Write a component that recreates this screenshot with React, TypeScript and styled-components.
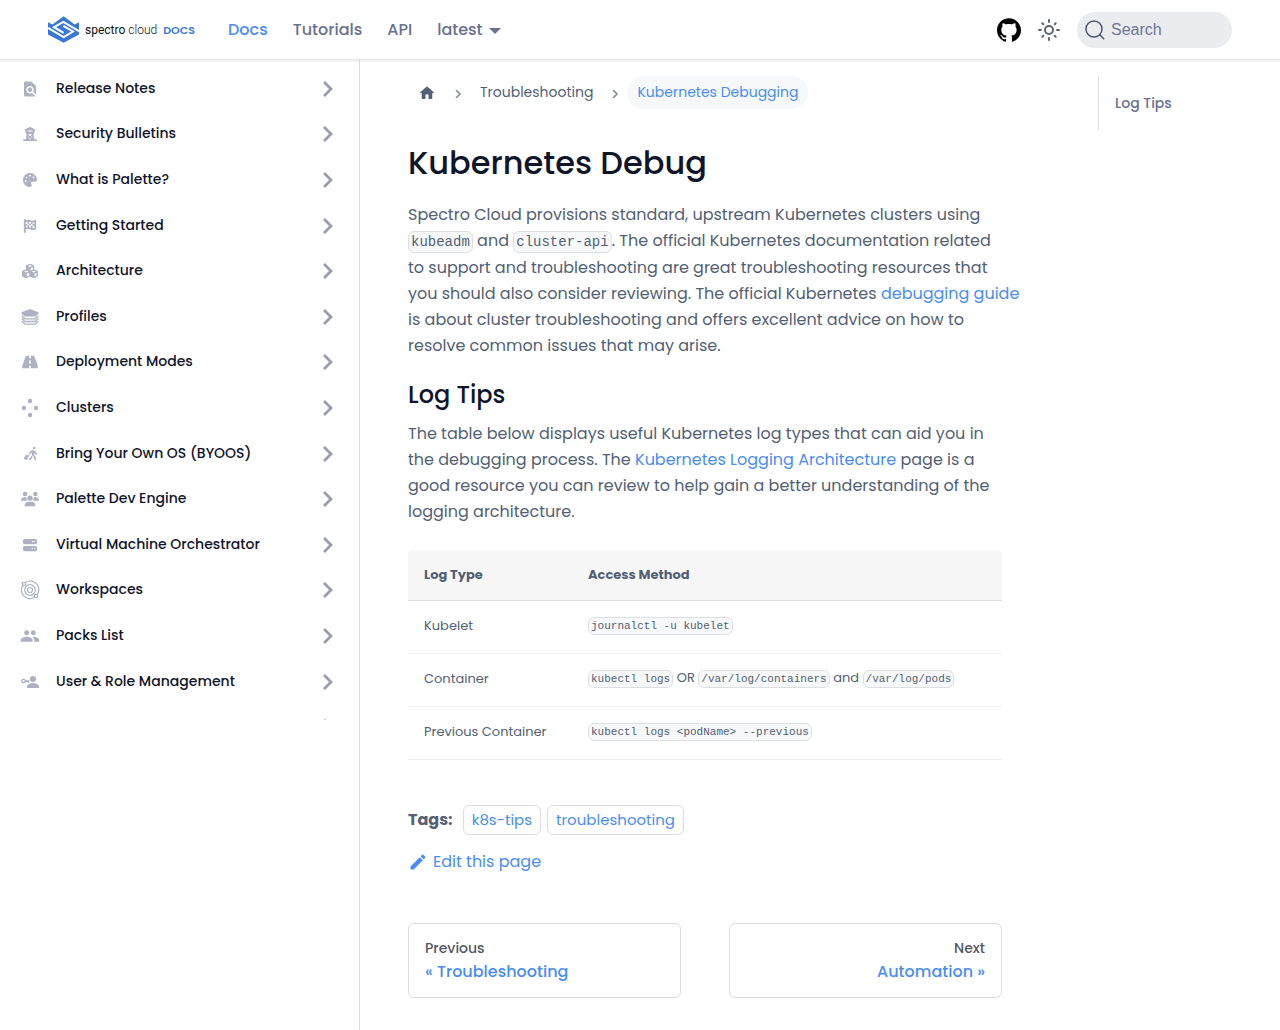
import React from "react";
import styled, { createGlobalStyle } from "styled-components";
import {
  FaCubes,
  FaFlagCheckered,
  FaPalette,
  FaPersonWalkingLuggage,
  FaRoad,
  FaServer,
  FaTowerObservation,
  FaUsers,
} from "react-icons/fa6";
import { MdEdit, MdFindInPage, MdPeople } from "react-icons/md";
import { SiGithub } from "react-icons/si";

const colors = {
  text: "#525f74",
  heading: "#10152a",
  link: "#4a8df2",
  nav: "#68718f",
  icon: "#adb1c1",
  chevron: "#9b9cb0",
  border: "#dadce0",
  code: "#f6f8fa",
};

const GlobalStyle = createGlobalStyle`
  *, *::before, *::after { box-sizing: border-box; }
  body {
    margin: 0;
    background: #fff;
    color: ${colors.text};
    font-family: Poppins, Inter, "Noto Sans", sans-serif;
    font-size: 16px;
    line-height: 26px;
  }
  a { color: ${colors.link}; text-decoration: none; }
  button { font: inherit; color: inherit; background: none; border: 0; padding: 0; cursor: pointer; }
`;

/* ---------- header ---------- */

const Header = styled.header`
  position: sticky;
  top: 0;
  z-index: 2;
  display: flex;
  align-items: center;
  justify-content: space-between;
  height: 60px;
  padding: 0 48px;
  background: #fff;
  border-bottom: 1px solid #e8e8e8;
  box-shadow: 0 1px 2px rgba(0, 0, 0, 0.1);
`;

const HeaderSide = styled.div<{ $gap: number }>`
  display: flex;
  align-items: center;
  gap: ${(p) => p.$gap}px;
`;

const Brand = styled.a`
  display: flex;
  align-items: center;
  gap: 6px;
  width: 148px;
  color: #111;
  font-family: Roboto, sans-serif;
  font-size: 12px;
  line-height: 16px;
  white-space: nowrap;
`;

const BrandLight = styled.span`
  font-weight: 300;
`;

const BrandDocs = styled.strong`
  color: #3a78d6;
  font-family: Poppins, Inter, sans-serif;
  font-size: 11px;
  font-weight: 600;
`;

const NavLinks = styled.nav`
  display: flex;
  align-items: center;
  gap: 25px;
`;

const NavLink = styled.a<{ $active?: boolean }>`
  display: flex;
  align-items: center;
  gap: 6px;
  color: ${(p) => (p.$active ? colors.link : colors.nav)};
  font-size: 16px;
  font-weight: 500;
`;

const Caret = styled.span`
  margin-top: 2px;
  border: 6px solid transparent;
  border-top-color: currentColor;
  border-bottom: 0;
`;

const IconLink = styled.a`
  display: flex;
  color: #000;
`;

const IconButton = styled.button`
  display: flex;
  color: #5b6478;
`;

const SearchButton = styled.button`
  display: flex;
  align-items: center;
  gap: 6px;
  width: 155px;
  height: 36px;
  padding: 0 8px;
  border-radius: 18px;
  background: #ebecf0;
  color: #6b759a;
  font-family: "Liberation Sans", Arial, sans-serif;
  font-size: 16px;
`;

/* ---------- page frame ---------- */

const Page = styled.div`
  display: grid;
  grid-template-columns: 360px minmax(0, 1fr);
  min-height: calc(100vh - 60px);
`;

const Sidebar = styled.aside`
  border-right: 1px solid ${colors.border};
`;

const SidebarScroll = styled.nav`
  height: 660px;
  padding-top: 6px;
  overflow: hidden;
`;

const SidebarList = styled.ul`
  display: grid;
  grid-auto-rows: 1fr;
  height: 684px;
  margin: 0;
  padding: 0;
  list-style: none;
`;

const SidebarItem = styled.li`
  display: flex;
  align-items: center;
  padding: 0 20px;
`;

const SidebarLink = styled.a`
  display: flex;
  flex: 1;
  align-items: center;
  gap: 16px;
  color: ${colors.heading};
  font-size: 14px;
  font-weight: 500;
  line-height: 20px;
`;

const SidebarLabel = styled.span`
  padding-bottom: 2px;
`;

const SidebarIcon = styled.span`
  display: flex;
  justify-content: center;
  width: 20px;
  color: ${colors.icon};
`;

const Expand = styled.button`
  display: flex;
  color: ${colors.chevron};
`;

const Content = styled.div`
  display: grid;
  grid-template-columns: minmax(0, 1fr) 134px;
  gap: 96px;
  padding: 16px 48px 32px;
`;

const Toc = styled.nav`
  align-self: start;
  padding: 14px 16px;
  border-left: 1px solid ${colors.border};
  font-size: 14px;
  font-weight: 500;
`;

const TocLink = styled.a`
  color: ${colors.nav};
`;

/* ---------- article ---------- */

const Crumbs = styled.ol`
  display: flex;
  align-items: center;
  margin: 0;
  padding: 0;
  list-style: none;
  font-size: 14px;
  line-height: 33px;
`;

const Crumb = styled.li`
  display: flex;
  align-items: center;
`;

const CrumbArrow = styled.svg`
  margin: 2px 8px 0;
  color: #7d8490;
`;

const CrumbLink = styled.a`
  display: flex;
  align-items: center;
  height: 33px;
  padding: 0 10px;
  color: ${colors.text};
`;

const CrumbCurrent = styled.span`
  padding: 0 10px;
  border-radius: 17px;
  background: ${colors.code};
  color: ${colors.link};
`;

const Title = styled.h1`
  margin: 34px 0 19px;
  color: ${colors.heading};
  font-size: 32px;
  font-weight: 500;
  line-height: 40px;
`;

const Subtitle = styled.h2`
  margin: 21px 0 11px;
  color: ${colors.heading};
  font-size: 24px;
  font-weight: 500;
  line-height: 30px;
`;

const Text = styled.p<{ $wide?: boolean }>`
  margin: 0 ${(p) => (p.$wide ? "-20px" : "0")} 0 0;
`;

const Code = styled.code`
  padding: 2px;
  border: 1px solid rgba(0, 0, 0, 0.1);
  border-radius: 6px;
  background: ${colors.code};
  font-family: "Liberation Mono", monospace;
  font-size: 14px;
  vertical-align: middle;
`;

const Table = styled.table`
  width: 100%;
  margin: 25px 0 45px;
  border-collapse: separate;
  border-spacing: 0;
  font-size: 13px;
  line-height: 20px;

  ${Code} {
    font-size: 11px;
  }
`;

const HeadCell = styled.th<{ $width?: number }>`
  width: ${(p) => (p.$width ? `${p.$width}px` : "auto")};
  height: 51px;
  padding: 0 16px;
  background: #f7f7f7;
  border-bottom: 1px solid ${colors.border};
  font-weight: 700;
  text-align: left;

  &:first-child {
    border-top-left-radius: 4px;
  }
  &:last-child {
    border-top-right-radius: 4px;
  }
`;

const Cell = styled.td`
  height: 53px;
  padding: 0 16px 2px;
  border-bottom: 1px solid #efeff1;
`;

const Tags = styled.div`
  display: flex;
  align-items: center;
  gap: 10px;
`;

const TagList = styled.ul`
  display: flex;
  gap: 6px;
  margin: 0;
  padding: 0;
  list-style: none;
`;

const Tag = styled.a`
  display: block;
  padding: 0 8px;
  border: 1px solid ${colors.border};
  border-radius: 6px;
  font-size: 15px;
  line-height: 28px;
`;

const EditLink = styled.a`
  display: inline-flex;
  align-items: center;
  gap: 5px;
  margin: 14px 0 48px;
`;

const Pager = styled.nav`
  display: grid;
  grid-template-columns: 1fr 1fr;
  gap: 48px;
`;

const PagerLink = styled.a<{ $align: "left" | "right" }>`
  height: 75px;
  padding: 13px 16px;
  border: 1px solid ${colors.border};
  border-radius: 6px;
  font-weight: 500;
  line-height: 23px;
  text-align: ${(p) => p.$align};
`;

const PagerHint = styled.span`
  display: block;
  color: #525860;
  font-size: 14px;
`;

/* ---------- drawings ---------- */

const Logo = () => (
  <svg width="31" height="27" viewBox="0 0 93 80" aria-hidden="true">
    <path fill="#3a78d6" d="M0 18 13 25 47 0 80 25 93 18V55L47 80 0 55Z" />
    <path
      fill="none"
      stroke="#fff"
      strokeWidth="6"
      d="M0 35 47 63 75 46 46 29M93 45 46 17 18 33 47 50"
    />
  </svg>
);

const Sun = () => (
  <svg width="24" height="24" viewBox="0 0 24 24" fill="none" stroke="currentColor" strokeWidth="2" strokeLinecap="round" aria-hidden="true">
    <circle cx="12" cy="12" r="4" />
    <path d="M12 2v2M12 20v2M2 12h2M20 12h2M5.3 5.3l1 1M17.7 17.7l1 1M5.3 18.7l1-1M17.7 6.3l1-1" />
  </svg>
);

const Magnifier = () => (
  <svg width="20" height="20" viewBox="0 0 20 20" fill="none" stroke="#4c566c" strokeWidth="1.5" strokeLinecap="round" aria-hidden="true">
    <circle cx="9" cy="9" r="8" />
    <path d="m14.7 14.7 4 4" />
  </svg>
);

const Home = () => (
  <svg width="18" height="18" viewBox="0 0 24 24" fill="currentColor" aria-hidden="true">
    <path d="M10 19v-5h4v5c0 .55.45 1 1 1h3c.55 0 1-.45 1-1v-7h1.7c.46 0 .68-.57.33-.87L12.67 3.6c-.38-.34-.96-.34-1.34 0l-8.36 7.53c-.34.3-.13.87.33.87H5v7c0 .55.45 1 1 1h3c.55 0 1-.45 1-1z" />
  </svg>
);

const Arrow = () => (
  <CrumbArrow width="8" height="8" viewBox="0 0 8 8" fill="none" stroke="currentColor" strokeWidth="1.5" aria-hidden="true">
    <path d="m2 0 4 4-4 4" />
  </CrumbArrow>
);

const Chevron = () => (
  <svg width="24" height="24" viewBox="0 0 24 24" fill="none" stroke="currentColor" strokeWidth="2.8" aria-hidden="true">
    <path d="m9 5 7 7-7 7" />
  </svg>
);

const Layers = () => (
  <svg width="18" height="16" viewBox="0 0 18 16" fill="currentColor" aria-hidden="true">
    <path d="M9 0 17.5 3.2V4.5L14.5 7.5H3.5L.5 4.5V3.2Z" />
    <path fill="none" stroke="currentColor" strokeWidth="1.3" d="m.8 6.8 3 3H14.2l3-3M.8 9.5l3 3H14.2l3-3M.8 12.2l3 3H14.2l3-3" />
  </svg>
);

const Dots = () => (
  <svg width="18" height="20" viewBox="0 0 18 20" fill="currentColor" aria-hidden="true">
    <circle cx="9" cy="3" r="2.2" />
    <circle cx="3" cy="10" r="2.2" />
    <circle cx="15" cy="10" r="2.2" />
    <circle cx="9" cy="17" r="2.2" />
  </svg>
);

const Orbit = () => (
  <svg width="20" height="20" viewBox="0 0 20 20" fill="none" stroke="currentColor" strokeWidth="1.2" aria-hidden="true">
    <circle cx="10" cy="10" r="2.5" />
    <circle cx="10" cy="10" r="5.3" />
    <path d="M5.5 2.5A8.5 8.5 0 0 1 17.2 14.5M14.5 17.3A8.5 8.5 0 0 1 2.7 5.7" />
    <circle cx="4" cy="4" r="1.7" />
    <circle cx="16" cy="16" r="1.7" />
  </svg>
);

const KeyUser = () => (
  <svg width="20" height="16" viewBox="0 0 20 16" fill="currentColor" aria-hidden="true">
    <circle cx="13" cy="5" r="3" />
    <path d="M7 14v-1.5c0-2.2 3.5-3.5 6-3.5s6 1.3 6 3.5V14Z" />
    <circle cx="3.5" cy="7" r="1.7" fill="none" stroke="currentColor" strokeWidth="1.3" />
    <path fill="none" stroke="currentColor" strokeWidth="1.3" d="M5 7h4.5M8.2 7v2" />
  </svg>
);

/* ---------- data ---------- */

const sections = [
  { label: "Release Notes", icon: <MdFindInPage size={18} /> },
  { label: "Security Bulletins", icon: <FaTowerObservation size={14} /> },
  { label: "What is Palette?", icon: <FaPalette size={14} /> },
  { label: "Getting Started", icon: <FaFlagCheckered size={14} /> },
  { label: "Architecture", icon: <FaCubes size={16} /> },
  { label: "Profiles", icon: <Layers /> },
  { label: "Deployment Modes", icon: <FaRoad size={16} /> },
  { label: "Clusters", icon: <Dots /> },
  { label: "Bring Your Own OS (BYOOS)", icon: <FaPersonWalkingLuggage size={15} /> },
  { label: "Palette Dev Engine", icon: <FaUsers size={18} /> },
  { label: "Virtual Machine Orchestrator", icon: <FaServer size={14} /> },
  { label: "Workspaces", icon: <Orbit /> },
  { label: "Packs List", icon: <MdPeople size={20} /> },
  { label: "User & Role Management", icon: <KeyUser /> },
  { label: "", icon: null },
];

const logs = [
  { type: "Kubelet", access: <Code>journalctl -u kubelet</Code> },
  {
    type: "Container",
    access: (
      <>
        <Code>kubectl logs</Code> OR <Code>/var/log/containers</Code> and <Code>/var/log/pods</Code>
      </>
    ),
  },
  { type: "Previous Container", access: <Code>kubectl logs &lt;podName&gt; --previous</Code> },
];

export default function App() {
  return (
    <>
      <GlobalStyle />
      <Header>
        <HeaderSide $gap={32}>
          <Brand href="#home">
            <Logo />
            <span>
              spectro <BrandLight>cloud</BrandLight>
            </span>
            <BrandDocs>DOCS</BrandDocs>
          </Brand>
          <NavLinks aria-label="Main">
            <NavLink href="#docs" $active>
              Docs
            </NavLink>
            <NavLink href="#tutorials">Tutorials</NavLink>
            <NavLink href="#api">API</NavLink>
            <NavLink href="#latest">
              latest
              <Caret />
            </NavLink>
          </NavLinks>
        </HeaderSide>
        <HeaderSide $gap={16}>
          <IconLink href="#github" aria-label="GitHub repository">
            <SiGithub size={24} />
          </IconLink>
          <IconButton type="button" aria-label="Switch colour mode">
            <Sun />
          </IconButton>
          <SearchButton type="button">
            <Magnifier />
            Search
          </SearchButton>
        </HeaderSide>
      </Header>

      <Page>
        <Sidebar>
          <SidebarScroll aria-label="Docs sidebar">
            <SidebarList>
              {sections.map(({ label, icon }) => (
                <SidebarItem key={label}>
                  <SidebarLink href="#section">
                    <SidebarIcon>{icon}</SidebarIcon>
                    <SidebarLabel>{label}</SidebarLabel>
                  </SidebarLink>
                  <Expand type="button" aria-label={`Expand ${label}`}>
                    <Chevron />
                  </Expand>
                </SidebarItem>
              ))}
            </SidebarList>
          </SidebarScroll>
        </Sidebar>

        <Content>
          <main>
            <nav aria-label="Breadcrumbs">
              <Crumbs>
                <Crumb>
                  <CrumbLink href="#home" aria-label="Home page">
                    <Home />
                  </CrumbLink>
                </Crumb>
                <Crumb>
                  <Arrow />
                  <CrumbLink href="#troubleshooting">Troubleshooting</CrumbLink>
                </Crumb>
                <Crumb>
                  <Arrow />
                  <CrumbCurrent>Kubernetes Debugging</CrumbCurrent>
                </Crumb>
              </Crumbs>
            </nav>

            <Title>Kubernetes Debug</Title>
            <Text $wide>
              Spectro Cloud provisions standard, upstream Kubernetes clusters using <Code>kubeadm</Code> and{" "}
              <Code>cluster-api</Code>. The official Kubernetes documentation related
              <br />
              to support and troubleshooting are great troubleshooting resources that
              <br />
              you should also consider reviewing. The official Kubernetes <a href="#guide">debugging guide</a>
              <br />
              is about cluster troubleshooting and offers excellent advice on how to
              <br />
              resolve common issues that may arise.
            </Text>

            <Subtitle>Log Tips</Subtitle>
            <Text>
              The table below displays useful Kubernetes log types that can aid you in the debugging process. The{" "}
              <a href="#logging">Kubernetes Logging Architecture</a> page is a good resource you can review to help
              gain a better understanding of the logging architecture.
            </Text>

            <Table>
              <thead>
                <tr>
                  <HeadCell $width={164}>Log Type</HeadCell>
                  <HeadCell>Access Method</HeadCell>
                </tr>
              </thead>
              <tbody>
                {logs.map(({ type, access }) => (
                  <tr key={type}>
                    <Cell>{type}</Cell>
                    <Cell>{access}</Cell>
                  </tr>
                ))}
              </tbody>
            </Table>

            <Tags>
              <strong>Tags:</strong>
              <TagList>
                <li>
                  <Tag href="#k8s-tips">k8s-tips</Tag>
                </li>
                <li>
                  <Tag href="#tag">troubleshooting</Tag>
                </li>
              </TagList>
            </Tags>

            <EditLink href="#edit">
              <MdEdit size={20} />
              Edit this page
            </EditLink>

            <Pager aria-label="Docs pages">
              <PagerLink href="#previous" $align="left">
                <PagerHint>Previous</PagerHint>« Troubleshooting
              </PagerLink>
              <PagerLink href="#next" $align="right">
                <PagerHint>Next</PagerHint>Automation »
              </PagerLink>
            </Pager>
          </main>

          <Toc aria-label="On this page">
            <TocLink href="#log-tips">Log Tips</TocLink>
          </Toc>
        </Content>
      </Page>
    </>
  );
}
